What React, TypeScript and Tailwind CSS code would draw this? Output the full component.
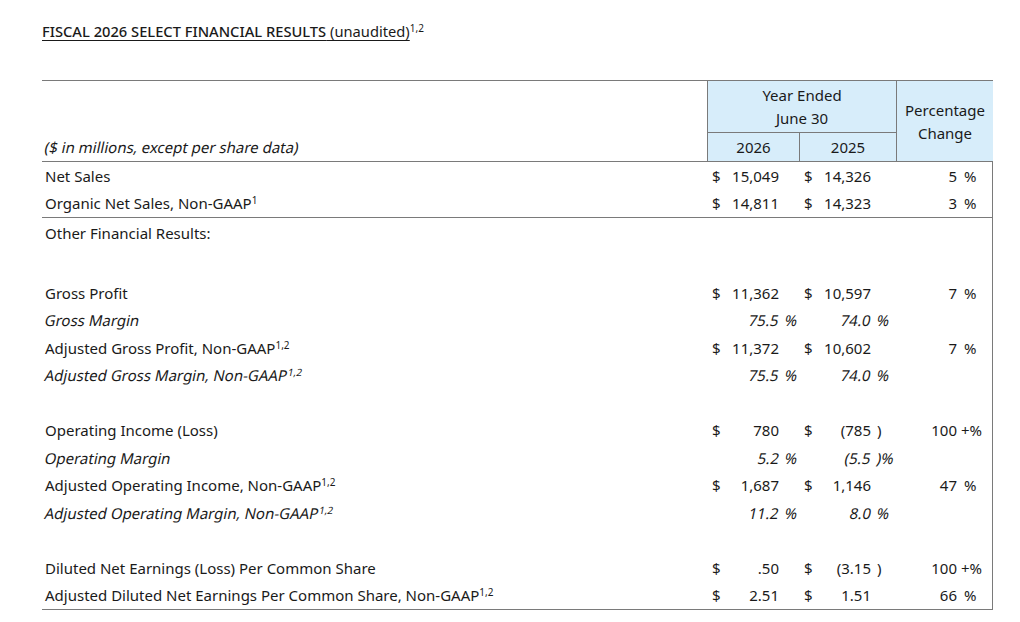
import type { ReactNode } from "react"

type Val = { d?: boolean; n: string; s?: string }
type Row = {
  label: ReactNode
  italic?: boolean
  h: string
  a?: Val
  b?: Val
  pct?: { n: string; s: string }
  line?: boolean
}

const Sup = ({ children }: { children: ReactNode }) => <sup className="text-[10px]">{children}</sup>

// the source uses a slanted regular face, not a true italic
const Slant = ({ children }: { children: ReactNode }) => (
  <span className="inline-block -skew-x-12">{children}</span>
)

const ROWS: Row[] = [
  { label: "Net Sales", h: "h-[28px]", a: { d: true, n: "15,049" }, b: { d: true, n: "14,326" }, pct: { n: "5", s: "%" } },
  {
    label: <>Organic Net Sales, Non-GAAP<Sup>1</Sup></>,
    h: "h-[28px]",
    a: { d: true, n: "14,811" },
    b: { d: true, n: "14,323" },
    pct: { n: "3", s: "%" },
    line: true,
  },
  { label: "Other Financial Results:", h: "h-[30px]" },
  { label: "", h: "h-[31px]" },
  { label: "Gross Profit", h: "h-[27.5px]", a: { d: true, n: "11,362" }, b: { d: true, n: "10,597" }, pct: { n: "7", s: "%" } },
  { label: "Gross Margin", italic: true, h: "h-[27.5px]", a: { n: "75.5", s: "%" }, b: { n: "74.0", s: "%" } },
  {
    label: <>Adjusted Gross Profit, Non-GAAP<Sup>1,2</Sup></>,
    h: "h-[27.5px]",
    a: { d: true, n: "11,372" },
    b: { d: true, n: "10,602" },
    pct: { n: "7", s: "%" },
  },
  {
    label: <>Adjusted Gross Margin, Non-GAAP<Sup>1,2</Sup></>,
    italic: true,
    h: "h-[27.5px]",
    a: { n: "75.5", s: "%" },
    b: { n: "74.0", s: "%" },
  },
  { label: "", h: "h-[27.5px]" },
  { label: "Operating Income (Loss)", h: "h-[27.5px]", a: { d: true, n: "780" }, b: { d: true, n: "(785", s: ")" }, pct: { n: "100", s: "+%" } },
  { label: "Operating Margin", italic: true, h: "h-[27.5px]", a: { n: "5.2", s: "%" }, b: { n: "(5.5", s: ")%" } },
  {
    label: <>Adjusted Operating Income, Non-GAAP<Sup>1,2</Sup></>,
    h: "h-[27.5px]",
    a: { d: true, n: "1,687" },
    b: { d: true, n: "1,146" },
    pct: { n: "47", s: "%" },
  },
  {
    label: <>Adjusted Operating Margin, Non-GAAP<Sup>1,2</Sup></>,
    italic: true,
    h: "h-[27.5px]",
    a: { n: "11.2", s: "%" },
    b: { n: "8.0", s: "%" },
  },
  { label: "", h: "h-[27.5px]" },
  {
    label: "Diluted Net Earnings (Loss) Per Common Share",
    h: "h-[27.5px]",
    a: { d: true, n: ".50" },
    b: { d: true, n: "(3.15", s: ")" },
    pct: { n: "100", s: "+%" },
  },
  {
    label: <>Adjusted Diluted Net Earnings Per Common Share, Non-GAAP<Sup>1,2</Sup></>,
    h: "h-[27.5px]",
    a: { d: true, n: "2.51" },
    b: { d: true, n: "1.51" },
    pct: { n: "66", s: "%" },
  },
]

function ValCell({ v, italic, suffixW }: { v?: Val; italic?: boolean; suffixW: string }) {
  if (!v) return <div />
  const wrap = (t: string) => (italic ? <Slant>{t}</Slant> : t)
  return (
    <div className="flex items-center">
      <span className="pl-[5px] w-[20px]">{v.d ? "$" : ""}</span>
      <span className="flex-1 text-right">{wrap(v.n)}</span>
      <span className={`${suffixW} pl-[6px] text-left whitespace-nowrap`}>{v.s ? wrap(v.s) : ""}</span>
    </div>
  )
}

export default function App() {
  return (
    <div
      className="w-[1020px] h-[622px] bg-white text-[15px] text-[#1a1a1a] overflow-hidden"
      style={{ fontFamily: '"Noto Sans", "Open Sans", sans-serif' }}
    >
      <div className="pl-[42px] pt-[21px] leading-[20px] text-[14.7px]">
        <span className="underline underline-offset-[3px] font-medium">FISCAL 2026 SELECT FINANCIAL RESULTS</span>
        <span className="underline underline-offset-[3px]"> (unaudited)</span>
        <Sup>1,2</Sup>
      </div>

      <div className="ml-[42px] mt-[39px] w-[951px] border-t border-r border-b border-[#7a7a7a]">
        {/* header */}
        <div className="grid grid-cols-[665px_92px_97px_97px] grid-rows-[52px_28px] border-b border-[#7a7a7a]">
          <div className="row-span-2 flex items-end pl-[3px] pb-[3px]">
            <Slant>($ in millions, except per share data)</Slant>
          </div>
          <div className="col-span-2 bg-[#d7edfa] border-l border-b border-[#7a7a7a] flex items-center justify-center text-center leading-[23px]">
            Year Ended
            <br />
            June 30
          </div>
          <div className="row-span-2 bg-[#d7edfa] border-l border-[#7a7a7a] flex items-center justify-center text-center leading-[23px] pt-[2px]">
            Percentage
            <br />
            Change
          </div>
          <div className="bg-[#d7edfa] border-l border-[#7a7a7a] flex items-center justify-center">2026</div>
          <div className="bg-[#d7edfa] border-l border-[#7a7a7a] flex items-center justify-center">2025</div>
        </div>

        {/* body */}
        {ROWS.map((r, i) => (
          <div
            key={i}
            className={`grid grid-cols-[665px_92px_97px_97px] items-center ${r.h} ${r.line ? "border-b border-[#7a7a7a]" : ""}`}
          >
            <div className="pl-[3px] whitespace-nowrap">{r.italic ? <Slant>{r.label}</Slant> : r.label}</div>
            <ValCell v={r.a} italic={r.italic} suffixW="w-[20px]" />
            <ValCell v={r.b} italic={r.italic} suffixW="w-[25px]" />
            {r.pct ? (
              <div className="flex items-center">
                <span className="flex-1 text-right">{r.pct.n}</span>
                <span className={`w-[36px] text-left ${r.pct.s === "+%" ? "pl-[4px]" : "pl-[7px]"}`}>{r.pct.s}</span>
              </div>
            ) : (
              <div />
            )}
          </div>
        ))}
      </div>
    </div>
  )
}
